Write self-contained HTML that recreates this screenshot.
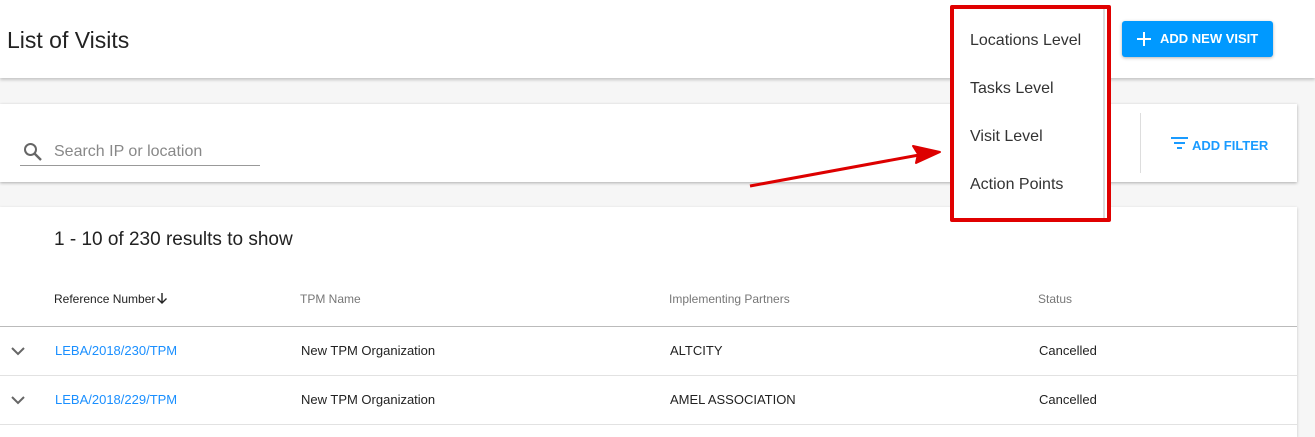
<!DOCTYPE html><html><head><style>
body{margin:0;width:1315px;height:428px;background:#f6f6f6;font-family:"Liberation Sans",Arial,sans-serif;position:relative;overflow:hidden}
.a{position:absolute}
</style></head><body>
<div class="a" style="left:0;top:0;width:1315px;height:78px;background:#fff;box-shadow:0 2px 3px rgba(0,0,0,.2)"></div>
<div class="a" style="left:7px;top:27px;font-size:23px;color:#222">List of Visits</div>
<div class="a" style="left:1122px;top:21px;width:151px;height:36px;background:#0099ff;border-radius:3px;box-shadow:0 1px 3px rgba(0,0,0,.3);color:#fff;font-weight:bold;font-size:13px;line-height:36px">
<svg style="position:absolute;left:14px;top:10px" width="16" height="16"><path d="M8 1V15M1 8H15" stroke="#fff" stroke-width="2"/></svg><span style="position:absolute;left:38px">ADD NEW VISIT</span></div>
<div class="a" style="left:0;top:104px;width:1297px;height:78px;background:#fff;box-shadow:0 1px 3px rgba(0,0,0,.3)"></div>
<svg class="a" style="left:22px;top:141px" width="22" height="22" viewBox="0 0 22 22"><circle cx="8.5" cy="8.5" r="5.5" fill="none" stroke="#666" stroke-width="2"/><path d="M12.5 12.5L19 19" stroke="#666" stroke-width="2.4"/></svg>
<div class="a" style="left:54px;top:143px;font-size:16px;color:#888">Search IP or location</div>
<div class="a" style="left:20px;top:165px;width:240px;height:1px;background:#999"></div>
<div class="a" style="left:1140px;top:113px;width:1px;height:60px;background:#ddd"></div>
<svg class="a" style="left:1171px;top:137px" width="18" height="14"><path d="M0 1H17M3 6H14M6 11H11" stroke="#1a9bff" stroke-width="2"/></svg>
<div class="a" style="left:1192px;top:138px;font-size:13px;font-weight:bold;color:#1a9bff">ADD FILTER</div>
<div class="a" style="left:0;top:207px;width:1297px;height:230px;background:#fff;box-shadow:0 1px 3px rgba(0,0,0,.2)"></div>
<div class="a" style="left:54px;top:229px;font-size:19px;color:#222">1 - 10 of 230 results to show</div>
<div class="a" style="left:54px;top:292px;font-size:12px;color:#222">Reference Number</div>
<svg class="a" style="left:156px;top:292px" width="12" height="13"><path d="M6 1V11M1.5 6.5L6 11L10.5 6.5" fill="none" stroke="#222" stroke-width="1.4"/></svg>
<div class="a" style="left:300px;top:292px;font-size:12px;color:#777">TPM Name</div>
<div class="a" style="left:669px;top:292px;font-size:12px;color:#777">Implementing Partners</div>
<div class="a" style="left:1038px;top:292px;font-size:12px;color:#777">Status</div>
<div class="a" style="left:0;top:326px;width:1297px;height:1px;background:#bbb"></div>
<div class="a" style="left:0;top:375px;width:1297px;height:1px;background:#e2e2e2"></div>
<div class="a" style="left:0;top:424px;width:1297px;height:1px;background:#e2e2e2"></div>
<svg class="a" style="left:11px;top:346px" width="14" height="10"><path d="M1 2L7 8L13 2" fill="none" stroke="#666" stroke-width="2"/></svg>
<svg class="a" style="left:11px;top:395px" width="14" height="10"><path d="M1 2L7 8L13 2" fill="none" stroke="#666" stroke-width="2"/></svg>
<div class="a" style="left:55px;top:343px;font-size:13px;color:#1a8fff">LEBA/2018/230/TPM</div>
<div class="a" style="left:301px;top:343px;font-size:13px;color:#222">New TPM Organization</div>
<div class="a" style="left:670px;top:343px;font-size:13px;color:#222">ALTCITY</div>
<div class="a" style="left:1039px;top:343px;font-size:13px;color:#222">Cancelled</div>
<div class="a" style="left:55px;top:392px;font-size:13px;color:#1a8fff">LEBA/2018/229/TPM</div>
<div class="a" style="left:301px;top:392px;font-size:13px;color:#222">New TPM Organization</div>
<div class="a" style="left:670px;top:392px;font-size:13px;color:#222">AMEL ASSOCIATION</div>
<div class="a" style="left:1039px;top:392px;font-size:13px;color:#222">Cancelled</div>
<div class="a" style="left:950px;top:5px;width:153px;height:209px;background:#fff;border:4px solid #e00000;border-radius:2px"></div>
<div class="a" style="left:1103px;top:9px;width:2px;height:209px;background:#ddd"></div>
<div class="a" style="left:970px;top:32px;font-size:16px;color:#333">Locations Level</div>
<div class="a" style="left:970px;top:80px;font-size:16px;color:#333">Tasks Level</div>
<div class="a" style="left:970px;top:128px;font-size:16px;color:#333">Visit Level</div>
<div class="a" style="left:970px;top:176px;font-size:16px;color:#333">Action Points</div>
<svg class="a" style="left:740px;top:140px" width="210" height="55"><path d="M10 46L190 13" stroke="#d00" stroke-width="3"/><path d="M200 12L173 6L178 14L176 23Z" fill="#d00" stroke="#d00" stroke-width="2" stroke-linejoin="round"/></svg>
</body></html>
